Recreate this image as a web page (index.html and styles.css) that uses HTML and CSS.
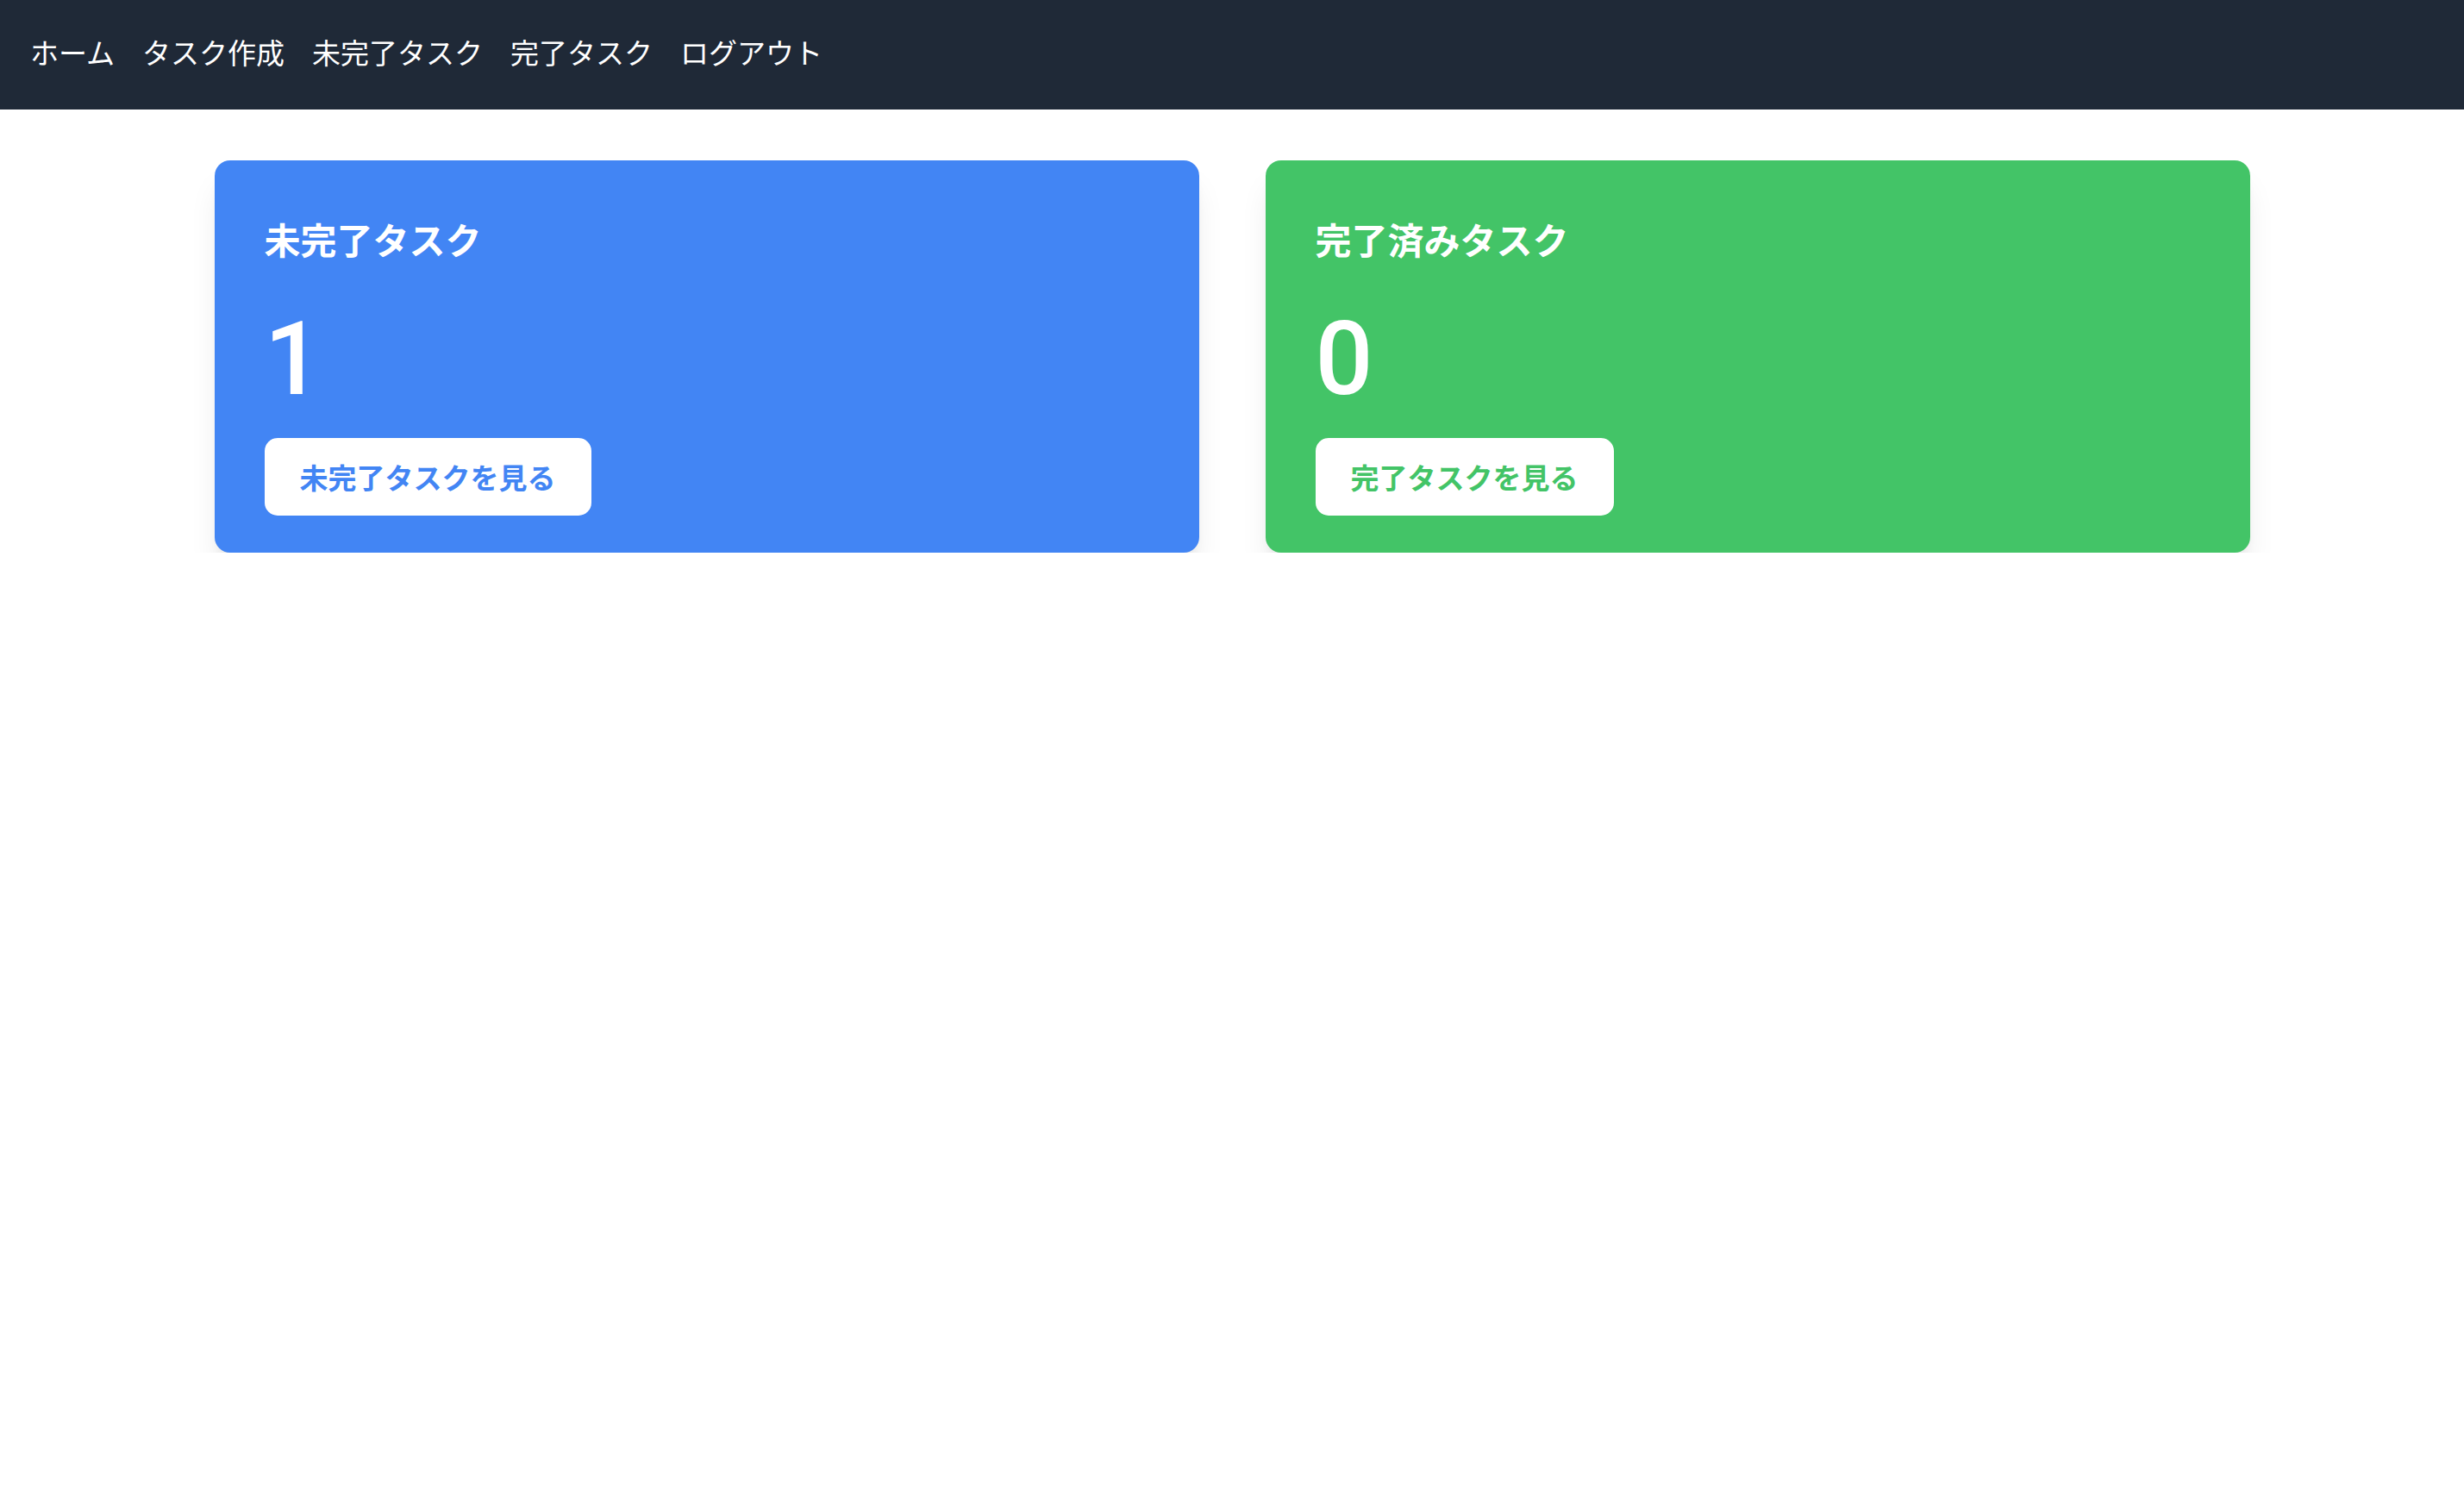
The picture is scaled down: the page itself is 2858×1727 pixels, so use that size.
FILE: index.html
```html
<!DOCTYPE html>
<html lang="ja">
<head>
<meta charset="utf-8">
<title>ダッシュボード</title>
<link rel="stylesheet" href="styles.css">
</head>
<body>
<nav class="topnav">
  <a class="nav-link" href="#">ホーム</a>
  <a class="nav-link" href="#">タスク作成</a>
  <a class="nav-link" href="#">未完了タスク</a>
  <a class="nav-link" href="#">完了タスク</a>
  <a class="nav-link" href="#">ログアウト</a>
</nav>
<main class="main">
  <div class="cards">
    <section class="card card-blue">
      <h2 class="card-title">未完了タスク</h2>
      <p class="card-count">1</p>
      <a class="card-btn" href="#">未完了タスクを見る</a>
    </section>
    <section class="card card-green">
      <h2 class="card-title">完了済みタスク</h2>
      <p class="card-count">0</p>
      <a class="card-btn" href="#">完了タスクを見る</a>
    </section>
  </div>
</main>
</body>
</html>
```
FILE: styles.css
```css
* { box-sizing: border-box; }
html, body {
  margin: 0;
  padding: 0;
  background: #ffffff;
  font-family: "Noto Sans CJK JP", "Noto Sans", sans-serif;
}
.topnav {
  height: 127px;
  background: #1f2937;
  display: flex;
  align-items: flex-start;
  gap: 32px;
  padding: 0 35px;
}
.nav-link {
  color: #ffffff;
  text-decoration: none;
  font-size: 33px;
  font-weight: 400;
  line-height: 120px;
  white-space: nowrap;
}
.main {
  padding-top: 59px;
}
.cards {
  width: 2361px;
  margin: 0 auto;
  display: grid;
  grid-template-columns: 1fr 1fr;
  gap: 77px;
}
.card {
  border-radius: 18px;
  padding: 62px 58px 43px;
  color: #ffffff;
  display: flex;
  flex-direction: column;
  align-items: flex-start;
  box-shadow: 0 27px 36px -7px rgba(0, 0, 0, 0.1), 0 10px 14px -8px rgba(0, 0, 0, 0.1);
}
.card-blue { background: #4285f4; }
.card-green { background: #43c467; }
.card-title {
  margin: 0;
  font-size: 42px;
  line-height: 58px;
  font-weight: 700;
}
.card-count {
  margin: 52px 0 0;
  font-family: Roboto, "Liberation Sans", sans-serif;
  font-size: 118px;
  line-height: 118px;
  font-weight: 500;
}
.card-btn {
  margin-top: 32px;
  display: inline-block;
  height: 90px;
  line-height: 90px;
  padding: 0 41px;
  background: #ffffff;
  border-radius: 15px;
  font-size: 33px;
  font-weight: 700;
  text-decoration: none;
  white-space: nowrap;
}
.card-blue .card-btn { color: #4285f4; }
.card-green .card-btn { color: #43c467; }
```
